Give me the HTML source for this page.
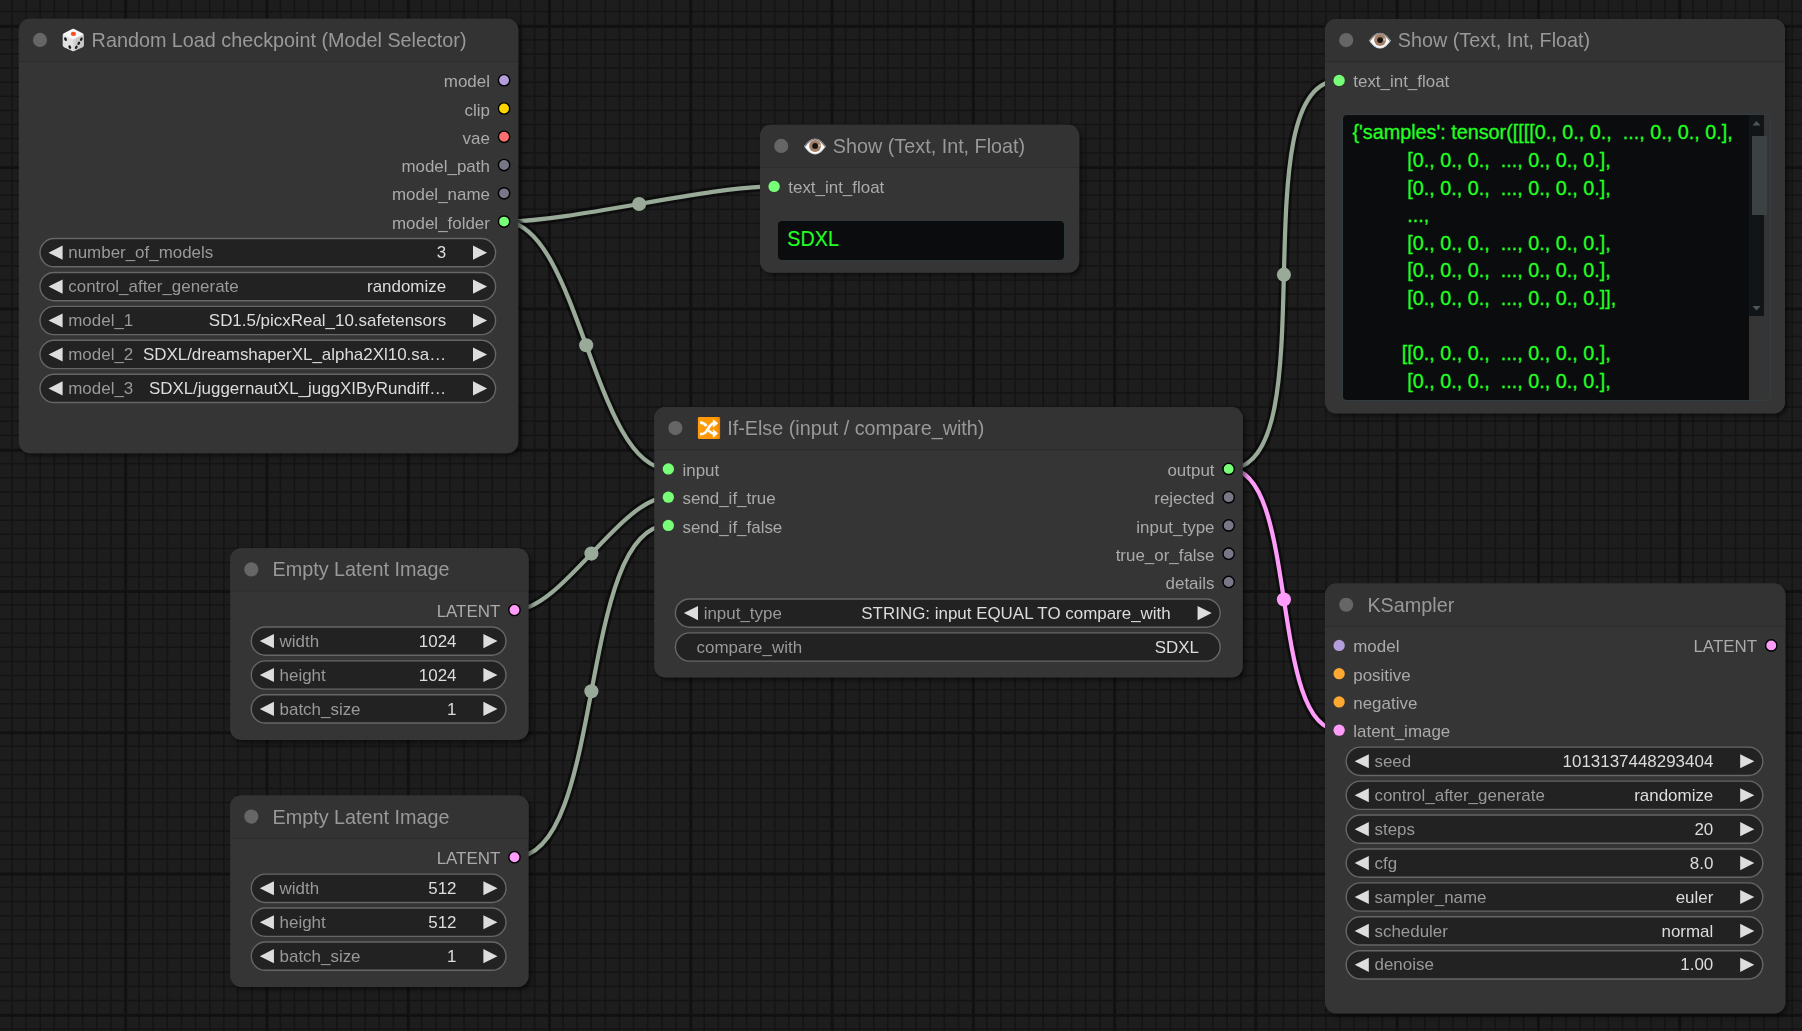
<!DOCTYPE html>
<html lang="en"><head><meta charset="utf-8"><title>ComfyUI</title>
<style>
html,body{margin:0;padding:0;background:#1d1d1d;}
body{width:1802px;height:1031px;overflow:hidden;position:relative;font-family:"Liberation Sans",Arial,sans-serif;}
#bg{position:absolute;left:0;top:0;width:1802px;height:1031px;}
svg#g{position:absolute;left:0;top:0;width:1802px;height:1031px;display:block;will-change:transform;}
text{font-family:"Liberation Sans",Arial,sans-serif;}
.t{font-size:19.79px;fill:#999;}
.s{font-size:16.96px;fill:#AAA;}
.wl{font-size:16.96px;fill:#999;}
.wv{font-size:16.96px;fill:#DDD;}
.e{text-anchor:end;}
.ta{position:absolute;box-sizing:border-box;background:#0b0c0e;border:1px solid #2f383c;border-radius:5px;color:#2f2;font-size:19.8px;line-height:27.6px;white-space:pre;overflow:hidden;-webkit-text-stroke:0.3px #2f2;}
</style></head><body>
<svg id="bg" width="1802" height="1031" viewBox="0 0 1802 1031">
<defs>
</defs>
<rect width="1802" height="1031" fill="#1d1d1d"/>
<rect x="11.23" y="0" width="1.41" height="1031" fill="#141414"/><rect x="25.35" y="0" width="1.41" height="1031" fill="#141414"/><rect x="39.48" y="0" width="1.41" height="1031" fill="#141414"/><rect x="53.61" y="0" width="1.41" height="1031" fill="#141414"/><rect x="67.74" y="0" width="1.41" height="1031" fill="#141414"/><rect x="81.87" y="0" width="1.41" height="1031" fill="#141414"/><rect x="95.99" y="0" width="1.41" height="1031" fill="#141414"/><rect x="110.12" y="0" width="1.41" height="1031" fill="#141414"/><rect x="138.38" y="0" width="1.41" height="1031" fill="#141414"/><rect x="152.51" y="0" width="1.41" height="1031" fill="#141414"/><rect x="166.63" y="0" width="1.41" height="1031" fill="#141414"/><rect x="180.76" y="0" width="1.41" height="1031" fill="#141414"/><rect x="194.89" y="0" width="1.41" height="1031" fill="#141414"/><rect x="209.02" y="0" width="1.41" height="1031" fill="#141414"/><rect x="223.15" y="0" width="1.41" height="1031" fill="#141414"/><rect x="237.27" y="0" width="1.41" height="1031" fill="#141414"/><rect x="251.40" y="0" width="1.41" height="1031" fill="#141414"/><rect x="279.66" y="0" width="1.41" height="1031" fill="#141414"/><rect x="293.79" y="0" width="1.41" height="1031" fill="#141414"/><rect x="307.91" y="0" width="1.41" height="1031" fill="#141414"/><rect x="322.04" y="0" width="1.41" height="1031" fill="#141414"/><rect x="336.17" y="0" width="1.41" height="1031" fill="#141414"/><rect x="350.30" y="0" width="1.41" height="1031" fill="#141414"/><rect x="364.43" y="0" width="1.41" height="1031" fill="#141414"/><rect x="378.55" y="0" width="1.41" height="1031" fill="#141414"/><rect x="392.68" y="0" width="1.41" height="1031" fill="#141414"/><rect x="420.94" y="0" width="1.41" height="1031" fill="#141414"/><rect x="435.07" y="0" width="1.41" height="1031" fill="#141414"/><rect x="449.19" y="0" width="1.41" height="1031" fill="#141414"/><rect x="463.32" y="0" width="1.41" height="1031" fill="#141414"/><rect x="477.45" y="0" width="1.41" height="1031" fill="#141414"/><rect x="491.58" y="0" width="1.41" height="1031" fill="#141414"/><rect x="505.71" y="0" width="1.41" height="1031" fill="#141414"/><rect x="519.83" y="0" width="1.41" height="1031" fill="#141414"/><rect x="533.96" y="0" width="1.41" height="1031" fill="#141414"/><rect x="562.22" y="0" width="1.41" height="1031" fill="#141414"/><rect x="576.35" y="0" width="1.41" height="1031" fill="#141414"/><rect x="590.47" y="0" width="1.41" height="1031" fill="#141414"/><rect x="604.60" y="0" width="1.41" height="1031" fill="#141414"/><rect x="618.73" y="0" width="1.41" height="1031" fill="#141414"/><rect x="632.86" y="0" width="1.41" height="1031" fill="#141414"/><rect x="646.99" y="0" width="1.41" height="1031" fill="#141414"/><rect x="661.11" y="0" width="1.41" height="1031" fill="#141414"/><rect x="675.24" y="0" width="1.41" height="1031" fill="#141414"/><rect x="703.50" y="0" width="1.41" height="1031" fill="#141414"/><rect x="717.63" y="0" width="1.41" height="1031" fill="#141414"/><rect x="731.75" y="0" width="1.41" height="1031" fill="#141414"/><rect x="745.88" y="0" width="1.41" height="1031" fill="#141414"/><rect x="760.01" y="0" width="1.41" height="1031" fill="#141414"/><rect x="774.14" y="0" width="1.41" height="1031" fill="#141414"/><rect x="788.27" y="0" width="1.41" height="1031" fill="#141414"/><rect x="802.39" y="0" width="1.41" height="1031" fill="#141414"/><rect x="816.52" y="0" width="1.41" height="1031" fill="#141414"/><rect x="844.78" y="0" width="1.41" height="1031" fill="#141414"/><rect x="858.91" y="0" width="1.41" height="1031" fill="#141414"/><rect x="873.03" y="0" width="1.41" height="1031" fill="#141414"/><rect x="887.16" y="0" width="1.41" height="1031" fill="#141414"/><rect x="901.29" y="0" width="1.41" height="1031" fill="#141414"/><rect x="915.42" y="0" width="1.41" height="1031" fill="#141414"/><rect x="929.55" y="0" width="1.41" height="1031" fill="#141414"/><rect x="943.67" y="0" width="1.41" height="1031" fill="#141414"/><rect x="957.80" y="0" width="1.41" height="1031" fill="#141414"/><rect x="986.06" y="0" width="1.41" height="1031" fill="#141414"/><rect x="1000.19" y="0" width="1.41" height="1031" fill="#141414"/><rect x="1014.31" y="0" width="1.41" height="1031" fill="#141414"/><rect x="1028.44" y="0" width="1.41" height="1031" fill="#141414"/><rect x="1042.57" y="0" width="1.41" height="1031" fill="#141414"/><rect x="1056.70" y="0" width="1.41" height="1031" fill="#141414"/><rect x="1070.83" y="0" width="1.41" height="1031" fill="#141414"/><rect x="1084.95" y="0" width="1.41" height="1031" fill="#141414"/><rect x="1099.08" y="0" width="1.41" height="1031" fill="#141414"/><rect x="1127.34" y="0" width="1.41" height="1031" fill="#141414"/><rect x="1141.47" y="0" width="1.41" height="1031" fill="#141414"/><rect x="1155.59" y="0" width="1.41" height="1031" fill="#141414"/><rect x="1169.72" y="0" width="1.41" height="1031" fill="#141414"/><rect x="1183.85" y="0" width="1.41" height="1031" fill="#141414"/><rect x="1197.98" y="0" width="1.41" height="1031" fill="#141414"/><rect x="1212.11" y="0" width="1.41" height="1031" fill="#141414"/><rect x="1226.23" y="0" width="1.41" height="1031" fill="#141414"/><rect x="1240.36" y="0" width="1.41" height="1031" fill="#141414"/><rect x="1268.62" y="0" width="1.41" height="1031" fill="#141414"/><rect x="1282.75" y="0" width="1.41" height="1031" fill="#141414"/><rect x="1296.87" y="0" width="1.41" height="1031" fill="#141414"/><rect x="1311.00" y="0" width="1.41" height="1031" fill="#141414"/><rect x="1325.13" y="0" width="1.41" height="1031" fill="#141414"/><rect x="1339.26" y="0" width="1.41" height="1031" fill="#141414"/><rect x="1353.39" y="0" width="1.41" height="1031" fill="#141414"/><rect x="1367.51" y="0" width="1.41" height="1031" fill="#141414"/><rect x="1381.64" y="0" width="1.41" height="1031" fill="#141414"/><rect x="1409.90" y="0" width="1.41" height="1031" fill="#141414"/><rect x="1424.03" y="0" width="1.41" height="1031" fill="#141414"/><rect x="1438.15" y="0" width="1.41" height="1031" fill="#141414"/><rect x="1452.28" y="0" width="1.41" height="1031" fill="#141414"/><rect x="1466.41" y="0" width="1.41" height="1031" fill="#141414"/><rect x="1480.54" y="0" width="1.41" height="1031" fill="#141414"/><rect x="1494.67" y="0" width="1.41" height="1031" fill="#141414"/><rect x="1508.79" y="0" width="1.41" height="1031" fill="#141414"/><rect x="1522.92" y="0" width="1.41" height="1031" fill="#141414"/><rect x="1551.18" y="0" width="1.41" height="1031" fill="#141414"/><rect x="1565.31" y="0" width="1.41" height="1031" fill="#141414"/><rect x="1579.43" y="0" width="1.41" height="1031" fill="#141414"/><rect x="1593.56" y="0" width="1.41" height="1031" fill="#141414"/><rect x="1607.69" y="0" width="1.41" height="1031" fill="#141414"/><rect x="1621.82" y="0" width="1.41" height="1031" fill="#141414"/><rect x="1635.95" y="0" width="1.41" height="1031" fill="#141414"/><rect x="1650.07" y="0" width="1.41" height="1031" fill="#141414"/><rect x="1664.20" y="0" width="1.41" height="1031" fill="#141414"/><rect x="1692.46" y="0" width="1.41" height="1031" fill="#141414"/><rect x="1706.59" y="0" width="1.41" height="1031" fill="#141414"/><rect x="1720.71" y="0" width="1.41" height="1031" fill="#141414"/><rect x="1734.84" y="0" width="1.41" height="1031" fill="#141414"/><rect x="1748.97" y="0" width="1.41" height="1031" fill="#141414"/><rect x="1763.10" y="0" width="1.41" height="1031" fill="#141414"/><rect x="1777.23" y="0" width="1.41" height="1031" fill="#141414"/><rect x="1791.35" y="0" width="1.41" height="1031" fill="#141414"/><rect x="0" y="10.82" width="1802" height="1.41" fill="#141414"/><rect x="0" y="39.08" width="1802" height="1.41" fill="#141414"/><rect x="0" y="53.21" width="1802" height="1.41" fill="#141414"/><rect x="0" y="67.33" width="1802" height="1.41" fill="#141414"/><rect x="0" y="81.46" width="1802" height="1.41" fill="#141414"/><rect x="0" y="95.59" width="1802" height="1.41" fill="#141414"/><rect x="0" y="109.72" width="1802" height="1.41" fill="#141414"/><rect x="0" y="123.85" width="1802" height="1.41" fill="#141414"/><rect x="0" y="137.97" width="1802" height="1.41" fill="#141414"/><rect x="0" y="152.10" width="1802" height="1.41" fill="#141414"/><rect x="0" y="180.36" width="1802" height="1.41" fill="#141414"/><rect x="0" y="194.49" width="1802" height="1.41" fill="#141414"/><rect x="0" y="208.61" width="1802" height="1.41" fill="#141414"/><rect x="0" y="222.74" width="1802" height="1.41" fill="#141414"/><rect x="0" y="236.87" width="1802" height="1.41" fill="#141414"/><rect x="0" y="251.00" width="1802" height="1.41" fill="#141414"/><rect x="0" y="265.13" width="1802" height="1.41" fill="#141414"/><rect x="0" y="279.25" width="1802" height="1.41" fill="#141414"/><rect x="0" y="293.38" width="1802" height="1.41" fill="#141414"/><rect x="0" y="321.64" width="1802" height="1.41" fill="#141414"/><rect x="0" y="335.77" width="1802" height="1.41" fill="#141414"/><rect x="0" y="349.89" width="1802" height="1.41" fill="#141414"/><rect x="0" y="364.02" width="1802" height="1.41" fill="#141414"/><rect x="0" y="378.15" width="1802" height="1.41" fill="#141414"/><rect x="0" y="392.28" width="1802" height="1.41" fill="#141414"/><rect x="0" y="406.41" width="1802" height="1.41" fill="#141414"/><rect x="0" y="420.53" width="1802" height="1.41" fill="#141414"/><rect x="0" y="434.66" width="1802" height="1.41" fill="#141414"/><rect x="0" y="462.92" width="1802" height="1.41" fill="#141414"/><rect x="0" y="477.05" width="1802" height="1.41" fill="#141414"/><rect x="0" y="491.17" width="1802" height="1.41" fill="#141414"/><rect x="0" y="505.30" width="1802" height="1.41" fill="#141414"/><rect x="0" y="519.43" width="1802" height="1.41" fill="#141414"/><rect x="0" y="533.56" width="1802" height="1.41" fill="#141414"/><rect x="0" y="547.69" width="1802" height="1.41" fill="#141414"/><rect x="0" y="561.81" width="1802" height="1.41" fill="#141414"/><rect x="0" y="575.94" width="1802" height="1.41" fill="#141414"/><rect x="0" y="604.20" width="1802" height="1.41" fill="#141414"/><rect x="0" y="618.33" width="1802" height="1.41" fill="#141414"/><rect x="0" y="632.45" width="1802" height="1.41" fill="#141414"/><rect x="0" y="646.58" width="1802" height="1.41" fill="#141414"/><rect x="0" y="660.71" width="1802" height="1.41" fill="#141414"/><rect x="0" y="674.84" width="1802" height="1.41" fill="#141414"/><rect x="0" y="688.97" width="1802" height="1.41" fill="#141414"/><rect x="0" y="703.09" width="1802" height="1.41" fill="#141414"/><rect x="0" y="717.22" width="1802" height="1.41" fill="#141414"/><rect x="0" y="745.48" width="1802" height="1.41" fill="#141414"/><rect x="0" y="759.61" width="1802" height="1.41" fill="#141414"/><rect x="0" y="773.73" width="1802" height="1.41" fill="#141414"/><rect x="0" y="787.86" width="1802" height="1.41" fill="#141414"/><rect x="0" y="801.99" width="1802" height="1.41" fill="#141414"/><rect x="0" y="816.12" width="1802" height="1.41" fill="#141414"/><rect x="0" y="830.25" width="1802" height="1.41" fill="#141414"/><rect x="0" y="844.37" width="1802" height="1.41" fill="#141414"/><rect x="0" y="858.50" width="1802" height="1.41" fill="#141414"/><rect x="0" y="886.76" width="1802" height="1.41" fill="#141414"/><rect x="0" y="900.89" width="1802" height="1.41" fill="#141414"/><rect x="0" y="915.01" width="1802" height="1.41" fill="#141414"/><rect x="0" y="929.14" width="1802" height="1.41" fill="#141414"/><rect x="0" y="943.27" width="1802" height="1.41" fill="#141414"/><rect x="0" y="957.40" width="1802" height="1.41" fill="#141414"/><rect x="0" y="971.53" width="1802" height="1.41" fill="#141414"/><rect x="0" y="985.65" width="1802" height="1.41" fill="#141414"/><rect x="0" y="999.78" width="1802" height="1.41" fill="#141414"/><rect x="0" y="1028.04" width="1802" height="1.41" fill="#141414"/><rect x="124.25" y="0" width="2.83" height="1031" fill="#111111"/><rect x="265.53" y="0" width="2.83" height="1031" fill="#111111"/><rect x="406.81" y="0" width="2.83" height="1031" fill="#111111"/><rect x="548.09" y="0" width="2.83" height="1031" fill="#111111"/><rect x="689.37" y="0" width="2.83" height="1031" fill="#111111"/><rect x="830.65" y="0" width="2.83" height="1031" fill="#111111"/><rect x="971.93" y="0" width="2.83" height="1031" fill="#111111"/><rect x="1113.21" y="0" width="2.83" height="1031" fill="#111111"/><rect x="1254.49" y="0" width="2.83" height="1031" fill="#111111"/><rect x="1395.77" y="0" width="2.83" height="1031" fill="#111111"/><rect x="1537.05" y="0" width="2.83" height="1031" fill="#111111"/><rect x="1678.33" y="0" width="2.83" height="1031" fill="#111111"/><rect x="0" y="24.95" width="1802" height="2.83" fill="#111111"/><rect x="0" y="166.23" width="1802" height="2.83" fill="#111111"/><rect x="0" y="307.51" width="1802" height="2.83" fill="#111111"/><rect x="0" y="448.79" width="1802" height="2.83" fill="#111111"/><rect x="0" y="590.07" width="1802" height="2.83" fill="#111111"/><rect x="0" y="731.35" width="1802" height="2.83" fill="#111111"/><rect x="0" y="872.63" width="1802" height="2.83" fill="#111111"/><rect x="0" y="1013.91" width="1802" height="2.83" fill="#111111"/>
</svg>
<svg id="g" width="1802" height="1031" viewBox="0 0 1802 1031">
<defs><filter id="sh" x="-10%" y="-10%" width="120%" height="120%"><feDropShadow dx="2.83" dy="2.83" stdDeviation="2.12" flood-color="#000" flood-opacity="0.5"/></filter></defs>
<g id="links">
<path d="M504.06 221.59 C572.15 221.59 706.05 186.39 774.13 186.39" fill="none" stroke="rgba(0,0,0,0.5)" stroke-width="9.89"/><path d="M504.06 221.59 C572.15 221.59 706.05 186.39 774.13 186.39" fill="none" stroke="#9A9" stroke-width="4.24"/><circle cx="639.10" cy="203.99" r="7.07" fill="#9A9"/>
<path d="M504.06 221.59 C578.29 221.59 594.11 468.89 668.34 468.89" fill="none" stroke="rgba(0,0,0,0.5)" stroke-width="9.89"/><path d="M504.06 221.59 C578.29 221.59 594.11 468.89 668.34 468.89" fill="none" stroke="#9A9" stroke-width="4.24"/><circle cx="586.20" cy="345.24" r="7.07" fill="#9A9"/>
<path d="M514.47 609.99 C562.17 609.99 620.63 497.16 668.34 497.16" fill="none" stroke="rgba(0,0,0,0.5)" stroke-width="9.89"/><path d="M514.47 609.99 C562.17 609.99 620.63 497.16 668.34 497.16" fill="none" stroke="#9A9" stroke-width="4.24"/><circle cx="591.40" cy="553.57" r="7.07" fill="#9A9"/>
<path d="M514.47 857.19 C605.89 857.19 576.91 525.43 668.34 525.43" fill="none" stroke="rgba(0,0,0,0.5)" stroke-width="9.89"/><path d="M514.47 857.19 C605.89 857.19 576.91 525.43 668.34 525.43" fill="none" stroke="#9A9" stroke-width="4.24"/><circle cx="591.40" cy="691.31" r="7.07" fill="#9A9"/>
<path d="M1228.66 468.89 C1329.64 468.89 1238.16 80.39 1339.13 80.39" fill="none" stroke="rgba(0,0,0,0.5)" stroke-width="9.89"/><path d="M1228.66 468.89 C1329.64 468.89 1238.16 80.39 1339.13 80.39" fill="none" stroke="#9A9" stroke-width="4.24"/><circle cx="1283.90" cy="274.64" r="7.07" fill="#9A9"/>
<path d="M1228.66 468.89 C1299.59 468.89 1268.21 730.20 1339.13 730.20" fill="none" stroke="rgba(0,0,0,0.5)" stroke-width="9.89"/><path d="M1228.66 468.89 C1299.59 468.89 1268.21 730.20 1339.13 730.20" fill="none" stroke="#FF9CF9" stroke-width="4.24"/><circle cx="1283.90" cy="599.54" r="7.07" fill="#FF9CF9"/>
</g>
<g id="n1">
<g filter="url(#sh)">
<path d="M18.80 441.94 V30.00 a11.31 11.31 0 0 1 11.31 -11.31 H506.89 a11.31 11.31 0 0 1 11.31 11.31 V441.94 a11.31 11.31 0 0 1 -11.31 11.31 H30.11 a11.31 11.31 0 0 1 -11.31 -11.31 Z" fill="#353535"/>
</g>
<path d="M18.80 61.10 V30.00 a11.31 11.31 0 0 1 11.31 -11.31 H506.89 a11.31 11.31 0 0 1 11.31 11.31 V61.10 Z" fill="#333"/>
<rect x="18.80" y="61.00" width="499.40" height="1.1" fill="rgba(0,0,0,0.14)"/>
<circle cx="40.00" cy="39.90" r="7.07" fill="#666"/>
<g transform="translate(62.50 28.70) scale(0.2140 0.2270)"><title>🎲</title><g transform="scale(4.673 4.405)">
<mask id="dm1"><path d="M10.7 2.4 L19.0 6.5 L19.2 16.4 L10.8 20.3 L2.5 16.4 L2.5 6.5 Z" fill="#fff" stroke="#fff" stroke-width="4.6" stroke-linejoin="round"/></mask>
<g mask="url(#dm1)">
<rect x="-1" y="-1" width="24" height="25" fill="#e2e2e2"/>
<path d="M10.8 9.9 L22 4.8 L22 18 L10.8 23.5 Z" fill="#c8c8c8"/>
<path d="M10.8 9.9 L13.2 8.8 L13.2 22.3 L10.8 23.5 Z" fill="#d4d4d4"/>
<path d="M-1 4.8 L10.7 -1 L22 4.8 L10.8 9.9 Z" fill="#f7f7f7" stroke="#f7f7f7" stroke-width="1.2" stroke-linejoin="round"/>
</g>
<ellipse cx="10.9" cy="5.2" rx="2.6" ry="2.1" fill="#ff4a1c"/>
<ellipse cx="3.0" cy="10.5" rx="1.25" ry="1.9" fill="#1c1c1c" transform="rotate(-28 3.0 10.5)"/>
<ellipse cx="7.3" cy="18.4" rx="1.25" ry="1.9" fill="#1c1c1c" transform="rotate(-28 7.3 18.4)"/>
<ellipse cx="18.8" cy="10.5" rx="1.2" ry="1.85" fill="#1c1c1c" transform="rotate(28 18.8 10.5)"/>
<ellipse cx="16.3" cy="14.6" rx="1.2" ry="1.85" fill="#1c1c1c" transform="rotate(28 16.3 14.6)"/>
<ellipse cx="13.8" cy="18.6" rx="1.2" ry="1.85" fill="#1c1c1c" transform="rotate(28 13.8 18.6)"/>
</g></g>
<text class="t" x="91.60" y="46.97">Random Load checkpoint (Model Selector)</text>
<circle cx="504.06" cy="80.24" r="5.65" fill="#B39DDB" stroke="#000" stroke-width="1.41"/>
<text class="s e" x="489.93" y="87.31">model</text>
<circle cx="504.06" cy="108.51" r="5.65" fill="#FFD500" stroke="#000" stroke-width="1.41"/>
<text class="s e" x="489.93" y="115.58">clip</text>
<circle cx="504.06" cy="136.78" r="5.65" fill="#FF6E6E" stroke="#000" stroke-width="1.41"/>
<text class="s e" x="489.93" y="143.85">vae</text>
<circle cx="504.06" cy="165.05" r="5.65" fill="#778" stroke="#000" stroke-width="1.41"/>
<text class="s e" x="489.93" y="172.12">model_path</text>
<circle cx="504.06" cy="193.32" r="5.65" fill="#778" stroke="#000" stroke-width="1.41"/>
<text class="s e" x="489.93" y="200.39">model_name</text>
<circle cx="504.06" cy="221.59" r="5.65" fill="#7F7" stroke="#000" stroke-width="1.41"/>
<text class="s e" x="489.93" y="228.66">model_folder</text>
<rect x="40.00" y="238.55" width="455.58" height="28.27" rx="14.13" fill="#222" stroke="#666" stroke-width="1.41"/>
<path d="M62.62 245.62 L48.48 252.69 L62.62 259.75 Z" fill="#DDD"/>
<path d="M472.97 245.62 L487.10 252.69 L472.97 259.75 Z" fill="#DDD"/>
<text class="wl" x="68.27" y="258.34">number_of_models</text>
<text class="wv e" x="446.11" y="258.34">3</text>
<rect x="40.00" y="272.48" width="455.58" height="28.27" rx="14.13" fill="#222" stroke="#666" stroke-width="1.41"/>
<path d="M62.62 279.54 L48.48 286.61 L62.62 293.68 Z" fill="#DDD"/>
<path d="M472.97 279.54 L487.10 286.61 L472.97 293.68 Z" fill="#DDD"/>
<text class="wl" x="68.27" y="292.26">control_after_generate</text>
<text class="wv e" x="446.11" y="292.26">randomize</text>
<rect x="40.00" y="306.40" width="455.58" height="28.27" rx="14.13" fill="#222" stroke="#666" stroke-width="1.41"/>
<path d="M62.62 313.47 L48.48 320.53 L62.62 327.60 Z" fill="#DDD"/>
<path d="M472.97 313.47 L487.10 320.53 L472.97 327.60 Z" fill="#DDD"/>
<text class="wl" x="68.27" y="326.19">model_1</text>
<text class="wv e" x="446.11" y="326.19">SD1.5/picxReal_10.safetensors</text>
<rect x="40.00" y="340.32" width="455.58" height="28.27" rx="14.13" fill="#222" stroke="#666" stroke-width="1.41"/>
<path d="M62.62 347.39 L48.48 354.46 L62.62 361.53 Z" fill="#DDD"/>
<path d="M472.97 347.39 L487.10 354.46 L472.97 361.53 Z" fill="#DDD"/>
<text class="wl" x="68.27" y="360.11">model_2</text>
<text class="wv e" x="446.11" y="360.11">SDXL/dreamshaperXL_alpha2Xl10.sa…</text>
<rect x="40.00" y="374.25" width="455.58" height="28.27" rx="14.13" fill="#222" stroke="#666" stroke-width="1.41"/>
<path d="M62.62 381.31 L48.48 388.38 L62.62 395.45 Z" fill="#DDD"/>
<path d="M472.97 381.31 L487.10 388.38 L472.97 395.45 Z" fill="#DDD"/>
<text class="wl" x="68.27" y="394.04">model_3</text>
<text class="wv e" x="446.11" y="394.04">SDXL/juggernautXL_juggXIByRundiff…</text>
</g>
<g id="n2">
<g filter="url(#sh)">
<path d="M760.00 261.49 V136.00 a11.31 11.31 0 0 1 11.31 -11.31 H1067.89 a11.31 11.31 0 0 1 11.31 11.31 V261.49 a11.31 11.31 0 0 1 -11.31 11.31 H771.31 a11.31 11.31 0 0 1 -11.31 -11.31 Z" fill="#353535"/>
</g>
<path d="M760.00 167.10 V136.00 a11.31 11.31 0 0 1 11.31 -11.31 H1067.89 a11.31 11.31 0 0 1 11.31 11.31 V167.10 Z" fill="#333"/>
<rect x="760.00" y="167.00" width="319.20" height="1.1" fill="rgba(0,0,0,0.14)"/>
<circle cx="781.20" cy="145.90" r="7.07" fill="#666"/>
<g transform="translate(804.10 138.40) scale(0.2170 0.1600)"><title>👁️</title><g transform="scale(4.608 6.25)">
<clipPath id="eyeclip2"><path d="M0 7.9 C3.5 3.3 7 0.1 10.9 0.1 C14.8 0.1 18.2 3.3 21.7 7.9 C18.2 12.8 14.8 16 10.9 16 C7 16 3.5 12.8 0 7.9 Z"/></clipPath>
<g clip-path="url(#eyeclip2)">
<rect x="-1" y="-1" width="24" height="18" fill="#fdfdfe"/>
<path d="M0 7.9 C3.5 12.8 7 16 10.9 16 C14.8 16 18.2 12.8 21.7 7.9" fill="none" stroke="#c3ced6" stroke-width="1.3"/>
<circle cx="11.0" cy="7.5" r="6" fill="#a57f65"/>
<circle cx="11.0" cy="7.5" r="2.9" fill="#141414"/>
<circle cx="15.3" cy="7.1" r="1.1" fill="#e8c6ab"/>
<path d="M0 7.9 C3.5 3.3 7 0.1 10.9 0.1 C14.8 0.1 18.2 3.3 21.7 7.9" fill="none" stroke="#707070" stroke-width="2.6" opacity="0.85"/>
</g>
</g></g>
<text class="t" x="832.80" y="152.97">Show (Text, Int, Float)</text>
<circle cx="774.13" cy="186.39" r="5.65" fill="#7F7"/>
<text class="s" x="788.27" y="193.46">text_int_float</text>
</g>
<g id="n3">
<g filter="url(#sh)">
<path d="M1325.00 402.19 V30.20 a11.31 11.31 0 0 1 11.31 -11.31 H1773.69 a11.31 11.31 0 0 1 11.31 11.31 V402.19 a11.31 11.31 0 0 1 -11.31 11.31 H1336.31 a11.31 11.31 0 0 1 -11.31 -11.31 Z" fill="#353535"/>
</g>
<path d="M1325.00 61.30 V30.20 a11.31 11.31 0 0 1 11.31 -11.31 H1773.69 a11.31 11.31 0 0 1 11.31 11.31 V61.30 Z" fill="#333"/>
<rect x="1325.00" y="61.20" width="460.00" height="1.1" fill="rgba(0,0,0,0.14)"/>
<circle cx="1346.20" cy="40.10" r="7.07" fill="#666"/>
<g transform="translate(1369.10 32.60) scale(0.2170 0.1600)"><title>👁️</title><g transform="scale(4.608 6.25)">
<clipPath id="eyeclip3"><path d="M0 7.9 C3.5 3.3 7 0.1 10.9 0.1 C14.8 0.1 18.2 3.3 21.7 7.9 C18.2 12.8 14.8 16 10.9 16 C7 16 3.5 12.8 0 7.9 Z"/></clipPath>
<g clip-path="url(#eyeclip3)">
<rect x="-1" y="-1" width="24" height="18" fill="#fdfdfe"/>
<path d="M0 7.9 C3.5 12.8 7 16 10.9 16 C14.8 16 18.2 12.8 21.7 7.9" fill="none" stroke="#c3ced6" stroke-width="1.3"/>
<circle cx="11.0" cy="7.5" r="6" fill="#a57f65"/>
<circle cx="11.0" cy="7.5" r="2.9" fill="#141414"/>
<circle cx="15.3" cy="7.1" r="1.1" fill="#e8c6ab"/>
<path d="M0 7.9 C3.5 3.3 7 0.1 10.9 0.1 C14.8 0.1 18.2 3.3 21.7 7.9" fill="none" stroke="#707070" stroke-width="2.6" opacity="0.85"/>
</g>
</g></g>
<text class="t" x="1397.80" y="47.16">Show (Text, Int, Float)</text>
<circle cx="1339.13" cy="80.39" r="5.65" fill="#7F7"/>
<text class="s" x="1353.27" y="87.46">text_int_float</text>
</g>
<g id="n4">
<g filter="url(#sh)">
<path d="M654.20 666.29 V418.20 a11.31 11.31 0 0 1 11.31 -11.31 H1231.49 a11.31 11.31 0 0 1 11.31 11.31 V666.29 a11.31 11.31 0 0 1 -11.31 11.31 H665.51 a11.31 11.31 0 0 1 -11.31 -11.31 Z" fill="#353535"/>
</g>
<path d="M654.20 449.30 V418.20 a11.31 11.31 0 0 1 11.31 -11.31 H1231.49 a11.31 11.31 0 0 1 11.31 11.31 V449.30 Z" fill="#333"/>
<rect x="654.20" y="449.20" width="588.60" height="1.1" fill="rgba(0,0,0,0.14)"/>
<circle cx="675.40" cy="428.10" r="7.07" fill="#666"/>
<g transform="translate(697.90 417.00) scale(0.2220 0.2200)"><title>🔀</title><g>
<linearGradient id="og4" x1="0" x2="1" y1="0" y2="0"><stop offset="0" stop-color="#ff9d0a"/><stop offset="0.85" stop-color="#ff9500"/><stop offset="1" stop-color="#e47f00"/></linearGradient>
<rect x="0" y="0" width="100" height="100" rx="6" fill="url(#og4)"/>
<g fill="none" stroke="#fdfdfd" stroke-width="12">
<path d="M10 78 C34 78 39 64 48 50 C57 36 60 28.6 74 28.6"/>
<path d="M10 25.5 C26 25.5 33 33 39 42"/>
<path d="M47 60 C55 70 60 74.5 74 74.5"/>
</g>
<path d="M69 12 L90 28.6 L69 46 Z" fill="#fdfdfd" stroke="#fdfdfd" stroke-width="3" stroke-linejoin="round"/>
<path d="M69 58 L90 74.5 L69 92 Z" fill="#fdfdfd" stroke="#fdfdfd" stroke-width="3" stroke-linejoin="round"/>
</g></g>
<text class="t" x="727.20" y="435.17">If-Else (input / compare_with)</text>
<circle cx="668.34" cy="468.89" r="5.65" fill="#7F7"/>
<text class="s" x="682.47" y="475.96">input</text>
<circle cx="668.34" cy="497.16" r="5.65" fill="#7F7"/>
<text class="s" x="682.47" y="504.23">send_if_true</text>
<circle cx="668.34" cy="525.43" r="5.65" fill="#7F7"/>
<text class="s" x="682.47" y="532.50">send_if_false</text>
<circle cx="1228.66" cy="468.89" r="5.65" fill="#7F7" stroke="#000" stroke-width="1.41"/>
<text class="s e" x="1214.53" y="475.96">output</text>
<circle cx="1228.66" cy="497.16" r="5.65" fill="#778" stroke="#000" stroke-width="1.41"/>
<text class="s e" x="1214.53" y="504.23">rejected</text>
<circle cx="1228.66" cy="525.43" r="5.65" fill="#778" stroke="#000" stroke-width="1.41"/>
<text class="s e" x="1214.53" y="532.50">input_type</text>
<circle cx="1228.66" cy="553.70" r="5.65" fill="#778" stroke="#000" stroke-width="1.41"/>
<text class="s e" x="1214.53" y="560.77">true_or_false</text>
<circle cx="1228.66" cy="581.97" r="5.65" fill="#778" stroke="#000" stroke-width="1.41"/>
<text class="s e" x="1214.53" y="589.04">details</text>
<rect x="675.40" y="598.93" width="544.78" height="28.27" rx="14.13" fill="#222" stroke="#666" stroke-width="1.41"/>
<path d="M698.02 606.00 L683.88 613.07 L698.02 620.13 Z" fill="#DDD"/>
<path d="M1197.57 606.00 L1211.70 613.07 L1197.57 620.13 Z" fill="#DDD"/>
<text class="wl" x="703.67" y="618.72">input_type</text>
<text class="wv e" x="1170.71" y="618.72">STRING: input EQUAL TO compare_with</text>
<rect x="675.40" y="632.86" width="544.78" height="28.27" rx="14.13" fill="#222" stroke="#666" stroke-width="1.41"/>
<text class="wl" x="696.61" y="652.64">compare_with</text>
<text class="wv e" x="1198.98" y="652.64">SDXL</text>
</g>
<g id="n5">
<g filter="url(#sh)">
<path d="M230.10 728.59 V559.50 a11.31 11.31 0 0 1 11.31 -11.31 H517.29 a11.31 11.31 0 0 1 11.31 11.31 V728.59 a11.31 11.31 0 0 1 -11.31 11.31 H241.41 a11.31 11.31 0 0 1 -11.31 -11.31 Z" fill="#353535"/>
</g>
<path d="M230.10 590.60 V559.50 a11.31 11.31 0 0 1 11.31 -11.31 H517.29 a11.31 11.31 0 0 1 11.31 11.31 V590.60 Z" fill="#333"/>
<rect x="230.10" y="590.50" width="298.50" height="1.1" fill="rgba(0,0,0,0.14)"/>
<circle cx="251.30" cy="569.40" r="7.07" fill="#666"/>
<text class="t" x="272.50" y="576.47">Empty Latent Image</text>
<circle cx="514.47" cy="609.99" r="5.65" fill="#FF9CF9" stroke="#000" stroke-width="1.41"/>
<text class="s e" x="500.33" y="617.06">LATENT</text>
<rect x="251.30" y="626.95" width="254.68" height="28.27" rx="14.13" fill="#222" stroke="#666" stroke-width="1.41"/>
<path d="M273.92 634.02 L259.78 641.09 L273.92 648.15 Z" fill="#DDD"/>
<path d="M483.37 634.02 L497.50 641.09 L483.37 648.15 Z" fill="#DDD"/>
<text class="wl" x="279.57" y="646.74">width</text>
<text class="wv e" x="456.51" y="646.74">1024</text>
<rect x="251.30" y="660.88" width="254.68" height="28.27" rx="14.13" fill="#222" stroke="#666" stroke-width="1.41"/>
<path d="M273.92 667.94 L259.78 675.01 L273.92 682.08 Z" fill="#DDD"/>
<path d="M483.37 667.94 L497.50 675.01 L483.37 682.08 Z" fill="#DDD"/>
<text class="wl" x="279.57" y="680.66">height</text>
<text class="wv e" x="456.51" y="680.66">1024</text>
<rect x="251.30" y="694.80" width="254.68" height="28.27" rx="14.13" fill="#222" stroke="#666" stroke-width="1.41"/>
<path d="M273.92 701.87 L259.78 708.93 L273.92 716.00 Z" fill="#DDD"/>
<path d="M483.37 701.87 L497.50 708.93 L483.37 716.00 Z" fill="#DDD"/>
<text class="wl" x="279.57" y="714.59">batch_size</text>
<text class="wv e" x="456.51" y="714.59">1</text>
</g>
<g id="n6">
<g filter="url(#sh)">
<path d="M230.10 975.79 V806.70 a11.31 11.31 0 0 1 11.31 -11.31 H517.29 a11.31 11.31 0 0 1 11.31 11.31 V975.79 a11.31 11.31 0 0 1 -11.31 11.31 H241.41 a11.31 11.31 0 0 1 -11.31 -11.31 Z" fill="#353535"/>
</g>
<path d="M230.10 837.80 V806.70 a11.31 11.31 0 0 1 11.31 -11.31 H517.29 a11.31 11.31 0 0 1 11.31 11.31 V837.80 Z" fill="#333"/>
<rect x="230.10" y="837.70" width="298.50" height="1.1" fill="rgba(0,0,0,0.14)"/>
<circle cx="251.30" cy="816.60" r="7.07" fill="#666"/>
<text class="t" x="272.50" y="823.66">Empty Latent Image</text>
<circle cx="514.47" cy="857.19" r="5.65" fill="#FF9CF9" stroke="#000" stroke-width="1.41"/>
<text class="s e" x="500.33" y="864.26">LATENT</text>
<rect x="251.30" y="874.15" width="254.68" height="28.27" rx="14.13" fill="#222" stroke="#666" stroke-width="1.41"/>
<path d="M273.92 881.22 L259.78 888.29 L273.92 895.35 Z" fill="#DDD"/>
<path d="M483.37 881.22 L497.50 888.29 L483.37 895.35 Z" fill="#DDD"/>
<text class="wl" x="279.57" y="893.94">width</text>
<text class="wv e" x="456.51" y="893.94">512</text>
<rect x="251.30" y="908.07" width="254.68" height="28.27" rx="14.13" fill="#222" stroke="#666" stroke-width="1.41"/>
<path d="M273.92 915.14 L259.78 922.21 L273.92 929.28 Z" fill="#DDD"/>
<path d="M483.37 915.14 L497.50 922.21 L483.37 929.28 Z" fill="#DDD"/>
<text class="wl" x="279.57" y="927.86">height</text>
<text class="wv e" x="456.51" y="927.86">512</text>
<rect x="251.30" y="942.00" width="254.68" height="28.27" rx="14.13" fill="#222" stroke="#666" stroke-width="1.41"/>
<path d="M273.92 949.07 L259.78 956.13 L273.92 963.20 Z" fill="#DDD"/>
<path d="M483.37 949.07 L497.50 956.13 L483.37 963.20 Z" fill="#DDD"/>
<text class="wl" x="279.57" y="961.79">batch_size</text>
<text class="wv e" x="456.51" y="961.79">1</text>
</g>
<g id="n7">
<g filter="url(#sh)">
<path d="M1325.00 1002.19 V594.90 a11.31 11.31 0 0 1 11.31 -11.31 H1774.09 a11.31 11.31 0 0 1 11.31 11.31 V1002.19 a11.31 11.31 0 0 1 -11.31 11.31 H1336.31 a11.31 11.31 0 0 1 -11.31 -11.31 Z" fill="#353535"/>
</g>
<path d="M1325.00 626.00 V594.90 a11.31 11.31 0 0 1 11.31 -11.31 H1774.09 a11.31 11.31 0 0 1 11.31 11.31 V626.00 Z" fill="#333"/>
<rect x="1325.00" y="625.90" width="460.40" height="1.1" fill="rgba(0,0,0,0.14)"/>
<circle cx="1346.20" cy="604.80" r="7.07" fill="#666"/>
<text class="t" x="1367.40" y="611.87">KSampler</text>
<circle cx="1339.13" cy="645.39" r="5.65" fill="#B39DDB"/>
<text class="s" x="1353.27" y="652.46">model</text>
<circle cx="1339.13" cy="673.66" r="5.65" fill="#FFA931"/>
<text class="s" x="1353.27" y="680.73">positive</text>
<circle cx="1339.13" cy="701.93" r="5.65" fill="#FFA931"/>
<text class="s" x="1353.27" y="709.00">negative</text>
<circle cx="1339.13" cy="730.20" r="5.65" fill="#FF9CF9"/>
<text class="s" x="1353.27" y="737.27">latent_image</text>
<circle cx="1771.26" cy="645.39" r="5.65" fill="#FF9CF9" stroke="#000" stroke-width="1.41"/>
<text class="s e" x="1757.13" y="652.46">LATENT</text>
<rect x="1346.20" y="747.16" width="416.58" height="28.27" rx="14.13" fill="#222" stroke="#666" stroke-width="1.41"/>
<path d="M1368.82 754.23 L1354.68 761.30 L1368.82 768.36 Z" fill="#DDD"/>
<path d="M1740.17 754.23 L1754.30 761.30 L1740.17 768.36 Z" fill="#DDD"/>
<text class="wl" x="1374.47" y="766.95">seed</text>
<text class="wv e" x="1713.31" y="766.95">1013137448293404</text>
<rect x="1346.20" y="781.09" width="416.58" height="28.27" rx="14.13" fill="#222" stroke="#666" stroke-width="1.41"/>
<path d="M1368.82 788.15 L1354.68 795.22 L1368.82 802.29 Z" fill="#DDD"/>
<path d="M1740.17 788.15 L1754.30 795.22 L1740.17 802.29 Z" fill="#DDD"/>
<text class="wl" x="1374.47" y="800.87">control_after_generate</text>
<text class="wv e" x="1713.31" y="800.87">randomize</text>
<rect x="1346.20" y="815.01" width="416.58" height="28.27" rx="14.13" fill="#222" stroke="#666" stroke-width="1.41"/>
<path d="M1368.82 822.08 L1354.68 829.14 L1368.82 836.21 Z" fill="#DDD"/>
<path d="M1740.17 822.08 L1754.30 829.14 L1740.17 836.21 Z" fill="#DDD"/>
<text class="wl" x="1374.47" y="834.80">steps</text>
<text class="wv e" x="1713.31" y="834.80">20</text>
<rect x="1346.20" y="848.93" width="416.58" height="28.27" rx="14.13" fill="#222" stroke="#666" stroke-width="1.41"/>
<path d="M1368.82 856.00 L1354.68 863.07 L1368.82 870.14 Z" fill="#DDD"/>
<path d="M1740.17 856.00 L1754.30 863.07 L1740.17 870.14 Z" fill="#DDD"/>
<text class="wl" x="1374.47" y="868.72">cfg</text>
<text class="wv e" x="1713.31" y="868.72">8.0</text>
<rect x="1346.20" y="882.86" width="416.58" height="28.27" rx="14.13" fill="#222" stroke="#666" stroke-width="1.41"/>
<path d="M1368.82 889.92 L1354.68 896.99 L1368.82 904.06 Z" fill="#DDD"/>
<path d="M1740.17 889.92 L1754.30 896.99 L1740.17 904.06 Z" fill="#DDD"/>
<text class="wl" x="1374.47" y="902.65">sampler_name</text>
<text class="wv e" x="1713.31" y="902.65">euler</text>
<rect x="1346.20" y="916.78" width="416.58" height="28.27" rx="14.13" fill="#222" stroke="#666" stroke-width="1.41"/>
<path d="M1368.82 923.85 L1354.68 930.92 L1368.82 937.98 Z" fill="#DDD"/>
<path d="M1740.17 923.85 L1754.30 930.92 L1740.17 937.98 Z" fill="#DDD"/>
<text class="wl" x="1374.47" y="936.57">scheduler</text>
<text class="wv e" x="1713.31" y="936.57">normal</text>
<rect x="1346.20" y="950.71" width="416.58" height="28.27" rx="14.13" fill="#222" stroke="#666" stroke-width="1.41"/>
<path d="M1368.82 957.77 L1354.68 964.84 L1368.82 971.91 Z" fill="#DDD"/>
<path d="M1740.17 957.77 L1754.30 964.84 L1740.17 971.91 Z" fill="#DDD"/>
<text class="wl" x="1374.47" y="970.49">denoise</text>
<text class="wv e" x="1713.31" y="970.49">1.00</text>
</g>
</svg>
<div class="ta" style="left:776.6px;top:219.5px;width:288px;height:41.3px;padding:5.6px 0 0 9.7px;-webkit-text-stroke-width:0.12px;"><span style="display:inline-block;transform:scaleY(1.08);transform-origin:50% 55%;">SDXL</span></div>
<div class="ta" style="left:1342px;top:114.2px;width:429.1px;height:286.5px;border-color:#343d41;background:#353535;padding:0;"><div style="position:absolute;left:0;top:0;width:405.7px;height:100%;background:#0b0c0e;padding:4.2px 0 0 9.4px;box-sizing:border-box;">{'samples': tensor([[[[0., 0., 0.,  ..., 0., 0., 0.],
          [0., 0., 0.,  ..., 0., 0., 0.],
          [0., 0., 0.,  ..., 0., 0., 0.],
          ...,
          [0., 0., 0.,  ..., 0., 0., 0.],
          [0., 0., 0.,  ..., 0., 0., 0.],
          [0., 0., 0.,  ..., 0., 0., 0.]],

         [[0., 0., 0.,  ..., 0., 0., 0.],
          [0., 0., 0.,  ..., 0., 0., 0.],</div><div style="position:absolute;left:405.7px;top:0;width:15px;height:201px;background:#111517;"></div><div style="position:absolute;left:408.7px;top:20.7px;width:15.7px;height:79.6px;background:#3c4144;"></div><svg style="position:absolute;left:405.7px;top:0" width="15" height="201" viewBox="0 0 15 201"><path d="M3.5 10.5 L7.5 6 L11.5 10.5 Z" fill="#50575b"/><path d="M3.5 191 L7.5 195.5 L11.5 191 Z" fill="#50575b"/></svg></div>
</body></html>
